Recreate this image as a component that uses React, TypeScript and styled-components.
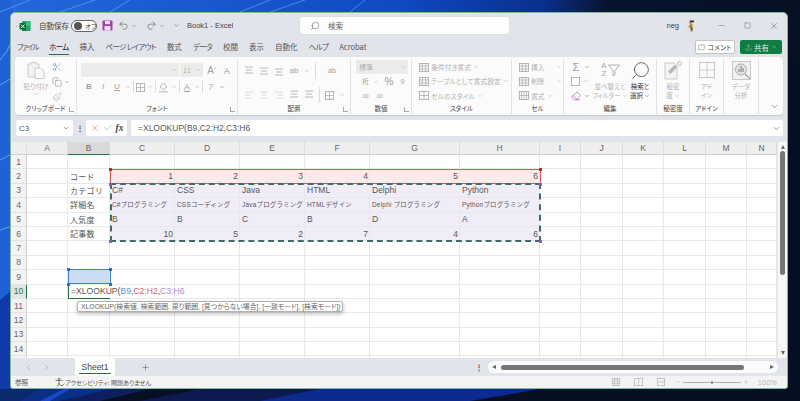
import { ReactNode } from 'react'
import styled, { createGlobalStyle } from 'styled-components'
import {
  AlignCenter, AlignLeft, AlignRight, ChevronDown, ChevronLeft, ChevronRight, Copy,
  Eraser, MessageSquare, Minus, Paintbrush, Plus, Scissors, Search, Square, Upload, X, Check, Undo2, Redo2,
} from 'lucide-react'

const GlobalStyle = createGlobalStyle`
  html, body { margin: 0; padding: 0; background: #0a1428; }
  * { box-sizing: border-box; }
  body { font-family: "Noto Sans CJK JP", "Liberation Sans", sans-serif; font-feature-settings: "palt"; }
`

const Root = styled.div`
  position: relative;
  width: 800px;
  height: 401px;
  overflow: hidden;
  padding: 12px 12px 12px 10px;
`

const WallpaperSvg = styled.svg`
  position: absolute;
  inset: 0;
`

const Window = styled.div`
  position: relative;
  height: 100%;
  display: flex;
  flex-direction: column;
  background: #e1e4ea;
  border: 1px solid #7fb89a;
  border-radius: 5px 5px 3px 3px;
  overflow: hidden;
  color: #444;
`

/* title bar */
const TitleBar = styled.div`
  height: 23px;
  flex: none;
  display: flex;
  align-items: center;
  margin-top: 1px;
  padding-left: 8px;
  font-size: 7.5px;
  color: #444;
`

const AutoSaveLabel = styled.span`
  margin-left: 8px;
  width: 32px;
  white-space: nowrap;
`

const Toggle = styled.div`
  width: 26px;
  height: 12px;
  flex: none;
  border: 1px solid #666;
  border-radius: 6px;
  display: flex;
  align-items: center;
  padding-left: 2px;
  gap: 3px;
  background: #fff;
  font-size: 6.5px;
  white-space: nowrap;
`

const ToggleKnob = styled.span`
  width: 8px;
  height: 8px;
  flex: none;
  border-radius: 50%;
  background: #555;
`

const QatGroup = styled.div`
  display: flex;
  align-items: center;
  margin-left: 5px;
  gap: 2px;
  width: 85px;
  flex: none;
`

const DocTitle = styled.span`
  font-family: "Liberation Sans", sans-serif;
  font-size: 7.5px;
  width: 113px;
  flex: none;
  white-space: nowrap;
`

const SearchBox = styled.div`
  width: 209px;
  height: 17px;
  flex: none;
  background: #fdfdfd;
  border-radius: 2px;
  box-shadow: 0 0 1px #bbb;
  display: flex;
  align-items: center;
  gap: 8px;
  padding-left: 10px;
  font-size: 7.5px;
  color: #666;
`

const Spacer = styled.div`
  flex: 1;
`

const UserName = styled.span`
  font-family: "Liberation Sans", sans-serif;
  font-size: 7.5px;
  margin-right: 5px;
`

const WinButtons = styled.div`
  display: flex;
  align-items: center;
  margin-left: 19px;
  margin-right: 8px;
  gap: 18px;
  color: #444;
`

/* tabs */
const TabRow = styled.div`
  height: 20px;
  flex: none;
  display: flex;
  align-items: center;
  padding-left: 6px;
  padding-right: 5px;
`

const Tab = styled.div<{ $active?: boolean; $tight?: number }>`
  height: 15px;
  margin-right: 11px;
  font-size: 7.5px;
  line-height: 14px;
  white-space: nowrap;
  letter-spacing: ${p => p.$tight ?? 0}px;
  color: ${p => (p.$active ? '#222' : '#555')};
  border-bottom: ${p => (p.$active ? '1.5px solid #217346' : 'none')};
`

const CommentButton = styled.div`
  width: 40px;
  height: 14px;
  background: #fff;
  border: 1px solid #c4c4c4;
  border-radius: 2px;
  font-size: 7px;
  display: flex;
  align-items: center;
  justify-content: center;
  gap: 2px;
  margin-right: 5px;
`

const ShareButton = styled.div`
  width: 42px;
  height: 14px;
  background: #107c41;
  border-radius: 2px;
  color: #dfeee5;
  font-size: 7.5px;
  display: flex;
  align-items: center;
  justify-content: center;
  gap: 2px;
`

/* ribbon */
const Ribbon = styled.div`
  height: 58px;
  flex: none;
  margin: 0 4px;
  background: #fbfbfb;
  border-radius: 4px;
  box-shadow: 0 1px 1px #c6c8cc;
  display: flex;
  position: relative;
`

const Collapse = styled.span`
  position: absolute;
  right: 4px;
  bottom: 4px;
  display: flex;
`

const Group = styled.div<{ $w: number; $plain?: boolean }>`
  position: relative;
  width: ${p => p.$w}px;
  flex: none;
  display: flex;
  flex-direction: column;
  margin: 2px 0 1px;
  border-right: ${p => (p.$plain ? 'none' : '1px solid #e2e2e2')};
`

const GroupBody = styled.div`
  flex: 1;
  display: flex;
  min-height: 0;
`

const GroupLabel = styled.div`
  height: 11px;
  flex: none;
  text-align: center;
  font-size: 6.5px;
  line-height: 11px;
  color: #444;
  white-space: nowrap;
`

const Launcher = styled.span`
  position: absolute;
  right: 2px;
  bottom: 2px;
  width: 5px;
  height: 5px;
  border-left: 1px solid #aaa;
  border-bottom: 1px solid #aaa;
`

const Stack = styled.div<{ $w?: number; $pad?: number; $gap?: number; $top?: number }>`
  display: flex;
  flex-direction: column;
  width: ${p => (p.$w ? `${p.$w}px` : 'auto')};
  padding-left: ${p => p.$pad ?? 0}px;
  padding-top: ${p => p.$top ?? 0}px;
  gap: ${p => p.$gap ?? 0}px;
  flex: none;
`

const Row = styled.div<{ $gap?: number; $h?: number; $pad?: number }>`
  display: flex;
  align-items: center;
  gap: ${p => p.$gap ?? 0}px;
  height: ${p => (p.$h ? `${p.$h}px` : 'auto')};
  padding-left: ${p => p.$pad ?? 0}px;
  color: #a8a8a8;
`

const Big = styled.div<{ $w: number; $dark?: boolean }>`
  width: ${p => p.$w}px;
  flex: none;
  display: flex;
  flex-direction: column;
  align-items: center;
  font-size: 6.5px;
  line-height: 9px;
  text-align: center;
  color: ${p => (p.$dark ? '#333' : '#b4b4b4')};
  white-space: nowrap;
`

const BigIcon = styled.div`
  height: 22px;
  display: flex;
  align-items: center;
  justify-content: center;
  margin-bottom: 1px;
`

const BigLine = styled.span`
  display: flex;
  align-items: center;
  gap: 1px;
`

const SortLetters = styled.span`
  font-family: "Liberation Sans", sans-serif;
  font-size: 8px;
  line-height: 8px;
  color: #a8a8a8;
  width: 7px;
  text-align: center;
`

const Combo = styled.div<{ $w: number }>`
  width: ${p => p.$w}px;
  height: 14px;
  background: #ebebeb;
  border-radius: 2px;
  display: flex;
  align-items: center;
  justify-content: space-between;
  padding: 0 2px 0 3px;
  font-size: 7px;
  color: #b0b0b0;
`

const Sep = styled.span<{ $h?: number }>`
  width: 1px;
  height: ${p => p.$h ?? 12}px;
  background: #dcdcdc;
  flex: none;
`

const Glyph = styled.span<{ $w?: number; $size?: number; $weight?: number; $italic?: boolean; $underline?: boolean }>`
  width: ${p => p.$w ?? 12}px;
  text-align: center;
  flex: none;
  font-family: "Liberation Sans", "Noto Sans CJK JP", sans-serif;
  font-size: ${p => p.$size ?? 8}px;
  font-weight: ${p => p.$weight ?? 400};
  font-style: ${p => (p.$italic ? 'italic' : 'normal')};
  text-decoration: ${p => (p.$underline ? 'underline' : 'none')};
  color: #a0a0a0;
  line-height: 10px;
  white-space: nowrap;
`

const StyleItem = styled.div`
  display: flex;
  align-items: center;
  gap: 2px;
  height: 15px;
  font-size: 6.8px;
  color: #b0b0b0;
  white-space: nowrap;
`

/* formula bar */
const FormulaBar = styled.div`
  height: 16px;
  flex: none;
  margin: 5px 4px 0 5px;
  display: flex;
  align-items: center;
`

const NameBox = styled.div`
  width: 57px;
  height: 16px;
  background: #fff;
  border-radius: 2px;
  display: flex;
  align-items: center;
  justify-content: space-between;
  padding: 0 3px;
  font-family: "Liberation Sans", sans-serif;
  font-size: 8px;
  color: #555;
`

const Dots = styled.div`
  width: 13px;
  text-align: center;
  font-size: 8px;
  line-height: 14px;
  color: #555;
  font-weight: 700;
`

const FxButtons = styled.div`
  width: 41px;
  height: 16px;
  background: #fff;
  border-radius: 2px;
  display: flex;
  align-items: center;
  justify-content: center;
  gap: 3px;
`

const Fx = styled.span`
  font-family: "Liberation Serif", serif;
  font-style: italic;
  font-weight: 700;
  font-size: 9.5px;
  color: #444;
`

const FormulaInput = styled.div`
  flex: 1;
  height: 16px;
  margin-left: 4px;
  background: #fff;
  border-radius: 2px;
  display: flex;
  align-items: center;
  justify-content: space-between;
  padding: 0 2px 0 7px;
  font-family: "Liberation Sans", sans-serif;
  font-size: 8.5px;
  color: #555;
`

/* sheet */
const SheetArea = styled.div`
  height: 216px;
  flex: none;
  margin-top: 6px;
  display: flex;
  background: #fff;
  overflow: hidden;
`

const GridWrap = styled.div`
  position: relative;
  width: 766px;
  flex: none;
  overflow: hidden;
`

const Grid = styled.div`
  display: grid;
  grid-template-columns: 16px 41px 42px 65px 65px 65px 65px 90px 80px 41px 42px 41px 42px 41px 30px;
  grid-template-rows: 13px repeat(15, 14.4px);
  font-family: "Liberation Sans", "Noto Sans CJK JP", sans-serif;
  font-size: 8.5px;
  font-feature-settings: normal;
`

const ColHead = styled.div<{ $on?: boolean }>`
  background: ${p => (p.$on ? '#d9d9d9' : '#eeeeee')};
  border-right: 1px solid #dcdcdc;
  border-bottom: ${p => (p.$on ? '1px solid #217346' : '1px solid #cfcfcf')};
  color: #666;
  display: flex;
  align-items: center;
  justify-content: center;
  font-size: 8.5px;
`

const RowHead = styled.div<{ $on?: boolean }>`
  background: ${p => (p.$on ? '#e3e3e3' : '#f3f3f3')};
  border-right: ${p => (p.$on ? '1px solid #217346' : '1px solid #cfcfcf')};
  border-bottom: 1px solid #e4e4e4;
  color: ${p => (p.$on ? '#217346' : '#666')};
  display: flex;
  align-items: center;
  justify-content: center;
  font-size: 8.5px;
`

const Cell = styled.div<{ $kind?: string; $right?: boolean; $label?: boolean; $small?: boolean }>`
  background: ${p => (p.$kind === 'red' ? '#fbeaea' : p.$kind === 'purple' ? '#f1edf8' : p.$kind === 'blue' ? '#cbddf2' : '#fff')};
  border-right: 1px solid #e8e8e8;
  border-bottom: 1px solid #e8e8e8;
  color: #555;
  display: flex;
  align-items: center;
  justify-content: ${p => (p.$right ? 'flex-end' : 'flex-start')};
  padding: 0 1px 0 2px;
  white-space: nowrap;
  overflow: hidden;
  font-size: ${p => (p.$small ? 6.4 : p.$label ? 8 : 8.5)}px;
  letter-spacing: ${p => (p.$small ? 0.25 : p.$label ? 0.3 : 0)}px;
`

const EditCell = styled.div`
  position: relative;
  z-index: 2;
  background: #fff;
  border-left: 1px solid #217346;
  border-bottom: 1.5px solid #217346;
  display: flex;
  align-items: center;
  padding-left: 2px;
  color: #555;
  font-size: 8.6px;
  white-space: nowrap;
`

const Ref = styled.span<{ $c: string }>`
  color: ${p => p.$c};
`

const Caret = styled.span`
  display: inline-block;
  width: 1px;
  height: 11px;
  background: #333;
  margin-left: 0.5px;
`

const Range = styled.div<{ $l: number; $t: number; $w: number; $h: number; $c: string; $dash?: boolean }>`
  position: absolute;
  left: ${p => p.$l}px;
  top: ${p => p.$t}px;
  width: ${p => p.$w}px;
  height: ${p => p.$h}px;
  border: ${p => (p.$dash ? `2px dashed ${p.$c}` : `1px solid ${p.$c}`)};
  pointer-events: none;
  z-index: 1;
`

const Corner = styled.span<{ $l: number; $t: number; $c: string }>`
  position: absolute;
  left: ${p => p.$l}px;
  top: ${p => p.$t}px;
  width: 3px;
  height: 3px;
  background: ${p => p.$c};
  z-index: 3;
`

const Hint = styled.div`
  position: absolute;
  left: 66px;
  top: 159px;
  width: 266px;
  height: 11px;
  z-index: 4;
  background: #fff;
  border: 1px solid #b0b0b0;
  border-radius: 2px;
  box-shadow: 0 2px 4px rgba(0, 0, 0, 0.25);
  padding-left: 3px;
  font-family: "Liberation Sans", "Noto Sans CJK JP", sans-serif;
  font-size: 6.85px;
  line-height: 9px;
  color: #666;
  white-space: nowrap;
  font-feature-settings: "palt";
`

const VScroll = styled.div`
  flex: 1;
  background: #f7f7f7;
  border-left: 1px solid #e6e6e6;
  display: flex;
  flex-direction: column;
  align-items: center;
  padding-top: 3px;
`

const ArrowUp = styled.span`
  border-left: 2.5px solid transparent;
  border-right: 2.5px solid transparent;
  border-bottom: 4px solid #666;
  margin-bottom: 2px;
`

const ArrowDown = styled.span`
  border-left: 2.5px solid transparent;
  border-right: 2.5px solid transparent;
  border-top: 4px solid #666;
  margin-bottom: 3px;
`

const VThumb = styled.div`
  width: 5px;
  height: 124px;
  background: #767676;
  border-radius: 3px;
`

/* sheet tabs */
const SheetTabs = styled.div`
  height: 18px;
  flex: none;
  display: flex;
  align-items: center;
  padding-left: 13px;
  color: #888;
`

const SheetTab = styled.div`
  width: 40px;
  height: 18px;
  margin-left: 24px;
  background: #fff;
  border-radius: 0 0 3px 3px;
  display: flex;
  align-items: center;
  justify-content: center;
  font-family: "Liberation Sans", sans-serif;
  font-size: 8.5px;
  color: #444;
  position: relative;
`

const TabLine = styled.span`
  position: absolute;
  left: 4px;
  right: 4px;
  bottom: 2px;
  height: 1.5px;
  background: #217346;
`

const HScroll = styled.div`
  width: 290px;
  height: 12px;
  margin: 0 9px 0 3px;
  background: #fbfbfb;
  border-radius: 6px;
  display: flex;
  align-items: center;
  padding: 0 4px;
  gap: 5px;
`

const ArrowLeft = styled.span`
  border-top: 2.5px solid transparent;
  border-bottom: 2.5px solid transparent;
  border-right: 4px solid #666;
  flex: none;
`

const ArrowRight = styled.span`
  border-top: 2.5px solid transparent;
  border-bottom: 2.5px solid transparent;
  border-left: 4px solid #666;
  flex: none;
`

const HThumb = styled.div`
  flex: 1;
  height: 5px;
  background: #767676;
  border-radius: 3px;
  margin-right: 21px;
`

/* status bar */
const StatusBar = styled.div`
  flex: 1;
  display: flex;
  align-items: center;
  background: #f3f3f3;
  padding-left: 4px;
  padding-right: 10px;
  font-size: 6.6px;
  color: #555;
`

const StatusAcc = styled.div`
  display: flex;
  align-items: center;
  gap: 0;
  margin-left: 27px;
  font-size: 6.1px;
`

const ViewIcons = styled.div`
  display: flex;
  align-items: center;
  gap: 14px;
  color: #bbb;
  margin-right: 10px;
`

const ZoomSlider = styled.div`
  width: 58px;
  height: 1px;
  background: #b0b0b0;
  margin: 0 2px;
  position: relative;
`

const ZoomTick = styled.span`
  position: absolute;
  left: 28px;
  top: -1px;
  width: 2px;
  height: 3px;
  background: #999;
`

const ZoomText = styled.span`
  font-family: "Liberation Sans", sans-serif;
  font-size: 7.5px;
  color: #bbb;
  margin-left: 9px;
`

/* drawings */
function Chev({ s = 6, c = '#999' }: { s?: number; c?: string }) {
  return <ChevronDown size={s} color={c} strokeWidth={1.6} style={{ flex: 'none' }} />
}

function Wallpaper() {
  return (
    <WallpaperSvg width="800" height="401" viewBox="0 0 800 401">
      <defs>
        <linearGradient id="wp" x1="0" y1="0" x2="1" y2="0">
          <stop offset="0" stopColor="#2468dc" />
          <stop offset="0.5" stopColor="#0f49c4" />
          <stop offset="0.68" stopColor="#0a2f8c" />
          <stop offset="0.76" stopColor="#07142e" />
          <stop offset="1" stopColor="#061022" />
        </linearGradient>
      </defs>
      <rect width="800" height="401" fill="#061022" />
      <rect width="800" height="60" fill="url(#wp)" />
      <rect width="12" height="401" fill="#1f62d6" />
      <path d="M0 300 L12 290 L12 401 L0 401 Z" fill="#0f3aa8" />
      <path d="M0 389 H150 L60 401 H0 Z" fill="#0b2f86" />
      <path d="M0 389 H40 L20 401 H0 Z" fill="#0b2a6e" />
      <path d="M60 401 L110 389 H150 L100 401 Z" fill="#0d1f5e" />
      <path d="M140 401 L200 389 H400 L300 401 Z" fill="#0c1a50" />
      <path d="M40 401 L64 389 H70 L50 401 Z" fill="#1a49c9" />
      <path d="M260 401 L320 389 H540 L470 401 Z" fill="#0c2a90" />
      <path d="M0 12 L30 0 M60 12 L95 0 M110 12 L130 0 M240 12 L270 0 M270 12 L305 0 M350 12 L365 0" stroke="#69b4f0" strokeWidth="1" opacity="0.6" fill="none" />
      <path d="M0 60 Q8 52 12 40 M0 160 L12 154 M0 85 L12 78 M0 230 L12 226" stroke="#7dc1f5" strokeWidth="1" opacity="0.7" fill="none" />
    </WallpaperSvg>
  )
}

function ExcelLogo() {
  return (
    <svg width="12" height="12" viewBox="0 0 12 12" style={{ flex: 'none' }}>
      <rect x="3" y="1" width="8.5" height="10" rx="1" fill="#21a366" />
      <rect x="7" y="1" width="4.5" height="5" fill="#33c481" />
      <rect x="3" y="6" width="4" height="5" fill="#107c41" />
      <rect x="0.5" y="3" width="6.5" height="6.5" rx="0.8" fill="#0e6b38" />
      <path d="M2 4.5 L5.5 8 M5.5 4.5 L2 8" stroke="#fff" strokeWidth="0.9" />
    </svg>
  )
}

function SaveIcon() {
  return (
    <svg width="11" height="11" viewBox="0 0 11 11" style={{ flex: 'none', marginRight: 3 }}>
      <rect x="0.5" y="0.5" width="10" height="10" rx="1" fill="#a23fa8" />
      <rect x="3" y="1" width="5" height="3.2" fill="#f3dff4" />
      <rect x="2.5" y="6" width="6" height="4.5" fill="#f3dff4" />
    </svg>
  )
}

function Avatar() {
  return (
    <svg width="14" height="14" viewBox="0 0 14 14" style={{ flex: 'none' }}>
      <circle cx="7" cy="7" r="7" fill="#e2e2e2" />
      <path d="M5 2 H10 L9 4 H7 L8.6 6 L8 9 L9 12 L6.6 13 L7 9 L4 8 L6 6 Z" fill="#a98b3d" />
      <rect x="6" y="1.5" width="4" height="1.5" fill="#333" />
      <rect x="6.5" y="8" width="2" height="3" fill="#555" />
    </svg>
  )
}

function PasteIcon() {
  return (
    <svg width="18" height="18" viewBox="0 0 18 18">
      <path d="M1 3 H4 V1.5 H9 V3 H12 V16 H1 Z" fill="#f2f2f2" stroke="#c4c4c4" strokeWidth="0.8" />
      <path d="M8 7 H13.5 L17 10 V17.5 H8 Z" fill="#fbfbfb" stroke="#bcbcbc" strokeWidth="0.8" />
    </svg>
  )
}

function GridIcon({ w = 12, h = 12, c = '#a8a8a8', rows = 3, cols = 3 }: { w?: number; h?: number; c?: string; rows?: number; cols?: number }) {
  const lines: ReactNode[] = []
  for (let i = 1; i < rows; i++) lines.push(<line key={`r${i}`} x1="0" x2={w} y1={(h * i) / rows} y2={(h * i) / rows} stroke={c} strokeWidth="0.7" />)
  for (let i = 1; i < cols; i++) lines.push(<line key={`c${i}`} y1="0" y2={h} x1={(w * i) / cols} x2={(w * i) / cols} stroke={c} strokeWidth="0.7" />)
  return (
    <svg width={w} height={h} viewBox={`0 0 ${w} ${h}`} style={{ flex: 'none' }}>
      <rect x="0.4" y="0.4" width={w - 0.8} height={h - 0.8} fill="none" stroke={c} strokeWidth="0.8" />
      {lines}
    </svg>
  )
}

function LinesIcon({ y = 0 }: { y?: number }) {
  return (
    <svg width="10" height="10" viewBox="0 0 10 10" style={{ flex: 'none' }}>
      <path d={`M1 ${1 + y} H9 M2 ${4 + y} H8 M1 ${7 + y} H9`} stroke="#a8a8a8" strokeWidth="0.8" />
    </svg>
  )
}

function FillIcon({ bar }: { bar: string }) {
  return (
    <svg width="11" height="11" viewBox="0 0 11 11" style={{ flex: 'none' }}>
      <path d="M5.5 1 L9 5 L5.5 8 L2 5 Z" fill="none" stroke="#a8a8a8" strokeWidth="0.8" />
      <rect x="1" y="9" width="9" height="1.6" fill={bar} />
    </svg>
  )
}

function FunnelIcon() {
  return (
    <svg width="12" height="13" viewBox="0 0 12 13">
      <path d="M0.5 1 H11.5 L7 6.5 V10.5 L5 12 V6.5 Z" fill="none" stroke="#a8a8a8" strokeWidth="0.9" />
    </svg>
  )
}

function SensitivityIcon() {
  return (
    <svg width="19" height="20" viewBox="0 0 19 20">
      <path d="M1 3 H10 L13 6 V19 H1 Z" fill="#f4f4f4" stroke="#c0c0c0" strokeWidth="0.8" />
      <path d="M5 13 L12 6" stroke="#b8b8b8" strokeWidth="3.5" />
      <path d="M13 4 L15 1 L18 3 L16 6 Z" fill="none" stroke="#b8b8b8" strokeWidth="0.9" />
    </svg>
  )
}

function AnalysisIcon() {
  return (
    <svg width="19" height="19" viewBox="0 0 19 19">
      <rect x="0.5" y="0.5" width="18" height="18" fill="#f1f1f1" stroke="#bbb" strokeWidth="0.8" />
      <circle cx="9" cy="8.5" r="5.5" fill="#e4e4e4" stroke="#aaa" strokeWidth="1" />
      <path d="M7 11 V8 M9 11 V5 M11 11 V7" stroke="#999" strokeWidth="1.4" />
      <path d="M13 13 L18 18" stroke="#aaa" strokeWidth="1.4" />
    </svg>
  )
}

function AccessIcon() {
  return (
    <svg width="10" height="10" viewBox="0 0 10 10" style={{ flex: 'none' }}>
      <circle cx="4" cy="2" r="1" fill="none" stroke="#555" strokeWidth="0.7" />
      <path d="M0.5 3.5 H7.5 M4 3.5 V6 L2.5 9.5 M4 6 L5.5 9" stroke="#555" strokeWidth="0.7" fill="none" />
      <path d="M6 8 L7 9 L9.5 6.5" stroke="#555" strokeWidth="0.7" fill="none" />
    </svg>
  )
}

/* ribbon groups */
function ClipboardGroup() {
  return (
    <Group $w={62}>
      <GroupBody>
        <Stack $w={37} $pad={6}>
          <Big $w={30}>
            <BigIcon><PasteIcon /></BigIcon>
            <span>貼り付け</span>
            <Chev />
          </Big>
        </Stack>
        <Stack $top={2} $gap={2}>
          <Row $h={13}><Scissors size={10} color="#4f85c4" strokeWidth={1.2} /></Row>
          <Row $h={13} $gap={2}><Copy size={10} color="#777" strokeWidth={1.1} /><Chev c="#555" /></Row>
          <Row $h={13}><Paintbrush size={10} color="#aaa" strokeWidth={1.1} /></Row>
        </Stack>
      </GroupBody>
      <GroupLabel>クリップボード</GroupLabel>
      <Launcher />
    </Group>
  )
}

function FontGroup() {
  return (
    <Group $w={161}>
      <GroupBody>
        <Stack $pad={4} $top={4} $gap={4}>
          <Row $gap={1}>
            <Combo $w={98}><span /><Chev /></Combo>
            <Combo $w={23}>11<Chev /></Combo>
            <Glyph $w={15} $size={10}>A<sup style={{ fontSize: 4 }}>^</sup></Glyph>
            <Glyph $w={15} $size={9}>A<sup style={{ fontSize: 4 }}>ˇ</sup></Glyph>
          </Row>
          <Row $gap={2} $pad={2}>
            <Glyph $weight={700}>B</Glyph>
            <Glyph $italic>I</Glyph>
            <Glyph $underline>U</Glyph>
            <Chev />
            <Sep />
            <GridIcon w={9} h={9} rows={2} cols={2} />
            <Chev />
            <Sep />
            <FillIcon bar="#d0d0d0" />
            <Chev />
            <Sep />
            <Glyph $w={10} $size={9} $underline>A</Glyph>
            <Chev />
            <Sep />
            <Glyph $w={12} $size={6}>ア</Glyph>
            <Chev c="#444" />
          </Row>
        </Stack>
      </GroupBody>
      <GroupLabel>フォント</GroupLabel>
      <Launcher />
    </Group>
  )
}

function AlignGroup() {
  return (
    <Group $w={113}>
      <GroupBody>
        <Stack $pad={6} $top={4} $gap={8}>
          <Row $gap={5}>
            <LinesIcon />
            <LinesIcon y={1} />
            <LinesIcon y={2} />
            <Glyph $w={10} $size={8}>ab</Glyph>
            <Chev />
            <Sep $h={16} />
            <Glyph $w={22} $size={7}>ab</Glyph>
          </Row>
          <Row $gap={5}>
            <AlignLeft size={10} color="#a8a8a8" strokeWidth={1} />
            <AlignCenter size={10} color="#a8a8a8" strokeWidth={1} />
            <AlignRight size={10} color="#a8a8a8" strokeWidth={1} />
            <LinesIcon />
            <LinesIcon />
            <Sep $h={16} />
            <GridIcon w={9} h={9} rows={2} cols={2} />
            <Chev />
          </Row>
        </Stack>
      </GroupBody>
      <GroupLabel>配置</GroupLabel>
      <Launcher />
    </Group>
  )
}

function NumberGroup() {
  return (
    <Group $w={61}>
      <GroupBody>
        <Stack $pad={5} $top={1} $gap={1}>
          <Combo $w={52}>標準<Chev /></Combo>
          <Row $gap={2} $h={14} $pad={4}>
            <Glyph $w={11} $size={6.5}>桁</Glyph>
            <Chev />
            <Glyph $w={16} $size={10}>%</Glyph>
            <Glyph $w={7} $size={7}>9</Glyph>
          </Row>
          <Row $gap={4} $h={14} $pad={4}>
            <Glyph $w={10} $size={5}>.00</Glyph>
            <Glyph $w={10} $size={5}>.00</Glyph>
          </Row>
        </Stack>
      </GroupBody>
      <GroupLabel>数値</GroupLabel>
      <Launcher />
    </Group>
  )
}

function StyleGroup() {
  return (
    <Group $w={100}>
      <GroupBody>
        <Stack $pad={7} $top={1}>
          <StyleItem><GridIcon w={10} h={9} />条件付き書式<Chev /></StyleItem>
          <StyleItem><GridIcon w={10} h={9} />テーブルとして書式設定<Chev /></StyleItem>
          <StyleItem><GridIcon w={10} h={9} rows={2} cols={2} />セルのスタイル<Chev /></StyleItem>
        </Stack>
      </GroupBody>
      <GroupLabel>スタイル</GroupLabel>
    </Group>
  )
}

function CellsGroup() {
  return (
    <Group $w={52}>
      <GroupBody>
        <Stack $pad={7} $top={1} $w={50}>
          <StyleItem><GridIcon w={10} h={9} />挿入<Spacer /><Chev /></StyleItem>
          <StyleItem><GridIcon w={10} h={9} />削除<Spacer /><Chev /></StyleItem>
          <StyleItem><GridIcon w={10} h={9} rows={2} cols={4} />書式<Chev /></StyleItem>
        </Stack>
      </GroupBody>
      <GroupLabel>セル</GroupLabel>
    </Group>
  )
}

function EditGroup() {
  return (
    <Group $w={93}>
      <GroupBody>
        <Stack $pad={7} $top={1} $w={30}>
          <Row $h={15} $gap={3}><Glyph $w={10} $size={11}>Σ</Glyph><Chev c="#444" /></Row>
          <Row $h={15} $gap={3}><GridIcon w={9} h={9} rows={1} cols={1} /><Chev /></Row>
          <Row $h={15} $gap={3}><Eraser size={10} color="#a23fa8" strokeWidth={1.4} /><Chev c="#444" /></Row>
        </Stack>
        <Big $w={32}>
          <BigIcon>
            <Stack>
              <SortLetters>A</SortLetters>
              <SortLetters>Z</SortLetters>
            </Stack>
            <FunnelIcon />
          </BigIcon>
          <span>並べ替えと</span>
          <BigLine>フィルター<Chev /></BigLine>
        </Big>
        <Big $w={28} $dark>
          <BigIcon><Search size={21} color="#555" strokeWidth={1} style={{ transform: 'scaleX(-1)' }} /></BigIcon>
          <span>検索と</span>
          <BigLine>選択<Chev c="#444" /></BigLine>
        </Big>
      </GroupBody>
      <GroupLabel>編集</GroupLabel>
    </Group>
  )
}

function BigGroup({ w, label, lines, icon, chevron, plain }: { w: number; label: string; lines: string[]; icon: ReactNode; chevron?: boolean; plain?: boolean }) {
  return (
    <Group $w={w} $plain={plain}>
      <GroupBody>
        <Big $w={w - 1}>
          <BigIcon>{icon}</BigIcon>
          {lines.map((l, i) => (
            <BigLine key={l}>{l}{chevron && i === lines.length - 1 && <Chev />}</BigLine>
          ))}
        </Big>
      </GroupBody>
      <GroupLabel>{label}</GroupLabel>
    </Group>
  )
}

const tabs: { name: string; tight?: number }[] = [
  { name: 'ファイル', tight: -1.2 },
  { name: 'ホーム', tight: -0.7 },
  { name: '挿入' },
  { name: 'ページ レイアウト', tight: -0.7 },
  { name: '数式' },
  { name: 'データ', tight: -0.6 },
  { name: '校閲' },
  { name: '表示' },
  { name: '自動化' },
  { name: 'ヘルプ', tight: -0.6 },
  { name: 'Acrobat' },
]

const cols = ['A', 'B', 'C', 'D', 'E', 'F', 'G', 'H', 'I', 'J', 'K', 'L', 'M', 'N']

const sheetRows: { label?: string; values?: (string | number)[]; kind?: string; small?: boolean }[] = [
  {},
  { label: 'コード', values: [1, 2, 3, 4, 5, 6], kind: 'red' },
  { label: 'カテゴリ', values: ['C#', 'CSS', 'Java', 'HTML', 'Delphi', 'Python'], kind: 'purple' },
  {
    label: '詳細名',
    values: ['C#プログラミング', 'CSSコーディング', 'Javaプログラミング', 'HTMLデザイン', 'Delphi プログラミング', 'Pythonプログラミング'],
    kind: 'purple',
    small: true,
  },
  { label: '人気度', values: ['B', 'B', 'C', 'B', 'D', 'A'], kind: 'purple' },
  { label: '記事数', values: [10, 5, 2, 7, 4, 6], kind: 'purple' },
]

function SheetGrid() {
  const rows: ReactNode[] = []
  for (let r = 1; r <= 15; r++) {
    const data = sheetRows[r - 1]
    // row 15 only peeks out under the sheet, its number is not visible
    rows.push(<RowHead key={`h${r}`} $on={r === 10}>{r < 15 ? r : ''}</RowHead>)
    cols.forEach((c, i) => {
      const key = `${c}${r}`
      if (c === 'B' && r === 10) {
        rows.push(
          <EditCell key={key}>
            =XLOOKUP(<Ref $c="#5b8fe0">B9</Ref>,<Ref $c="#e06060">C2:H2</Ref>,<Ref $c="#a78bd8">C3:H6</Ref><Caret />
          </EditCell>,
        )
        return
      }
      if (c === 'C' && r === 10) {
        rows.push(<Cell key={key} />)
        return
      }
      if (c === 'B') {
        rows.push(<Cell key={key} $label $kind={r === 9 ? 'blue' : undefined}>{data?.label}</Cell>)
        return
      }
      const value = data?.values && i >= 2 && i <= 7 ? data.values[i - 2] : undefined
      const inRange = value !== undefined
      rows.push(
        <Cell key={key} $kind={inRange ? data?.kind : undefined} $right={typeof value === 'number'} $small={data?.small}>
          {value}
        </Cell>,
      )
    })
  }
  return (
    <Grid>
      <ColHead />
      {cols.map(c => <ColHead key={c} $on={c === 'B'}>{c}</ColHead>)}
      {rows}
    </Grid>
  )
}

export default function App() {
  return (
    <Root>
      <GlobalStyle />
      <Wallpaper />
      <Window>
        <TitleBar>
          <ExcelLogo />
          <AutoSaveLabel>自動保存</AutoSaveLabel>
          <Toggle><ToggleKnob />オフ</Toggle>
          <QatGroup>
            <SaveIcon />
            <Undo2 size={11} color="#444" strokeWidth={1.1} />
            <Chev c="#555" />
            <Spacer />
            <Redo2 size={11} color="#444" strokeWidth={1.1} />
            <Chev c="#555" />
            <Spacer />
            <Chev c="#555" s={7} />
            <Spacer />
          </QatGroup>
          <DocTitle>Book1 - Excel</DocTitle>
          <SearchBox><Search size={10} color="#555" strokeWidth={1.2} style={{ transform: 'scaleX(-1)' }} />検索</SearchBox>
          <Spacer />
          <UserName>neg</UserName>
          <Avatar />
          <WinButtons>
            <Minus size={9} strokeWidth={1} />
            <Square size={7} strokeWidth={1.2} />
            <X size={10} strokeWidth={1} />
          </WinButtons>
        </TitleBar>
        <TabRow>
          {tabs.map(t => <Tab key={t.name} $active={t.name === 'ホーム'} $tight={t.tight}>{t.name}</Tab>)}
          <Spacer />
          <CommentButton><MessageSquare size={7} strokeWidth={1.2} />コメント</CommentButton>
          <ShareButton><Upload size={7} strokeWidth={1.2} />共有<Chev c="#dfeee5" s={6} /></ShareButton>
        </TabRow>
        <Ribbon>
          <ClipboardGroup />
          <FontGroup />
          <AlignGroup />
          <NumberGroup />
          <StyleGroup />
          <CellsGroup />
          <EditGroup />
          <BigGroup w={33} label="秘密度" lines={['秘密', '度']} chevron icon={<SensitivityIcon />} />
          <BigGroup w={34} label="アドイン" lines={['アド', 'イン']} icon={<GridIcon w={16} h={16} rows={2} cols={2} c="#bbb" />} />
          <BigGroup w={35} label="" lines={['データ', '分析']} icon={<AnalysisIcon />} />
          <Collapse><Chev s={9} c="#555" /></Collapse>
        </Ribbon>
        <FormulaBar>
          <NameBox>C3<Chev s={8} c="#555" /></NameBox>
          <Dots>⋮</Dots>
          <FxButtons>
            <X size={10} color="#d9534f" strokeWidth={1.2} />
            <Check size={10} color="#5fa777" strokeWidth={1.2} />
            <Fx>fx</Fx>
          </FxButtons>
          <FormulaInput>=XLOOKUP(B9,C2:H2,C3:H6<Chev s={9} c="#555" /></FormulaInput>
        </FormulaBar>
        <SheetArea>
          <GridWrap>
            <SheetGrid />
            <Range $l={99} $t={27} $w={431} $h={15} $c="#cf5b5b" />
            <Range $l={99} $t={41} $w={431} $h={59} $c="#3f6b6b" $dash />
            <Corner $l={98} $t={26} $c="#c02b2b" />
            <Corner $l={528} $t={26} $c="#c02b2b" />
            <Corner $l={98} $t={41} $c="#8a5cc8" />
            <Corner $l={528} $t={41} $c="#8a5cc8" />
            <Corner $l={98} $t={98} $c="#8a5cc8" />
            <Corner $l={528} $t={98} $c="#8a5cc8" />
            <Range $l={57} $t={127} $w={43} $h={15} $c="#3f7fd4" />
            <Corner $l={56} $t={126} $c="#2b6cd4" />
            <Corner $l={98} $t={126} $c="#2b6cd4" />
            <Corner $l={56} $t={141} $c="#2b6cd4" />
            <Corner $l={98} $t={141} $c="#2b6cd4" />
            <Hint>XLOOKUP(検索値, 検索範囲, 戻り範囲, [見つからない場合], [一致モード], [検索モード])</Hint>
          </GridWrap>
          <VScroll>
            <ArrowUp />
            <VThumb />
            <Spacer />
            <ArrowDown />
          </VScroll>
        </SheetArea>
        <SheetTabs>
          <ChevronLeft size={9} strokeWidth={1.2} />
          <ChevronRight size={9} strokeWidth={1.2} style={{ marginLeft: 9 }} />
          <SheetTab>Sheet1<TabLine /></SheetTab>
          <Plus size={9} color="#444" strokeWidth={1.2} style={{ marginLeft: 26 }} />
          <Spacer />
          <Dots>⋮</Dots>
          <HScroll>
            <ArrowLeft />
            <HThumb />
            <ArrowRight />
          </HScroll>
        </SheetTabs>
        <StatusBar>
          参照
          <StatusAcc><AccessIcon />アクセシビリティ: 問題ありません</StatusAcc>
          <Spacer />
          <ViewIcons>
            <GridIcon w={8} h={8} c="#bbb" />
            <GridIcon w={9} h={8} c="#bbb" rows={1} cols={2} />
            <GridIcon w={8} h={8} c="#bbb" rows={2} cols={1} />
          </ViewIcons>
          <Minus size={6} color="#bbb" />
          <ZoomSlider><ZoomTick /></ZoomSlider>
          <Plus size={6} color="#bbb" />
          <ZoomText>100%</ZoomText>
        </StatusBar>
      </Window>
    </Root>
  )
}
